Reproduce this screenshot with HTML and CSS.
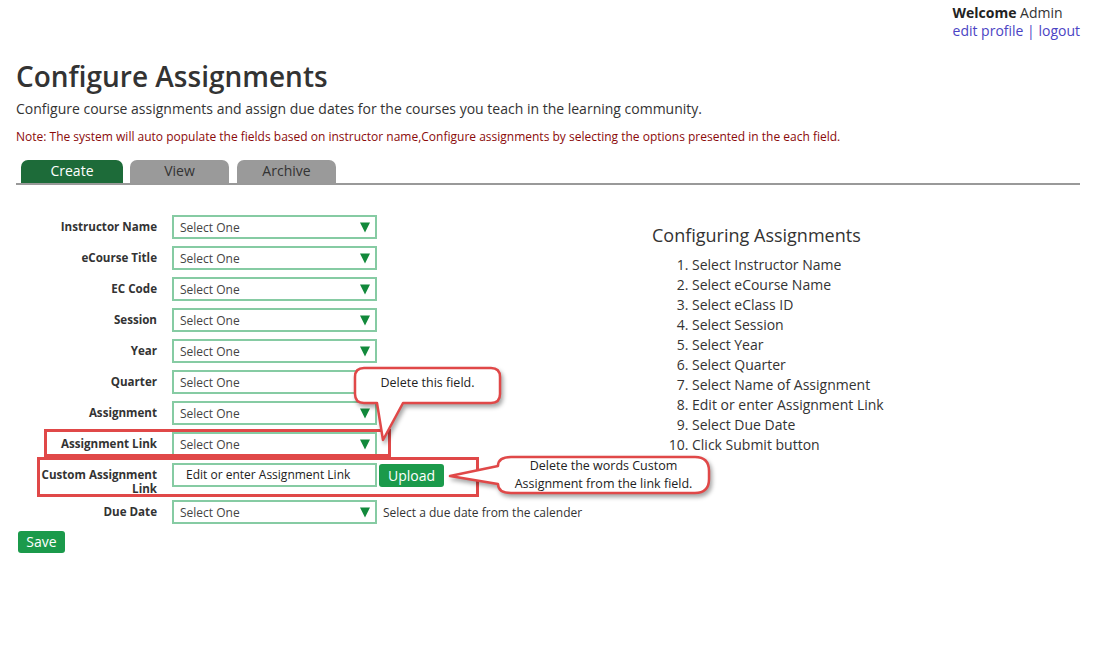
FILE: index.html
```html
<!DOCTYPE html>
<html lang="en">
<head>
<meta charset="utf-8">
<title>Configure Assignments</title>
<link rel="stylesheet" href="styles.css">
</head>
<body>
<header class="top">
  <div class="user">
    <div><b>Welcome</b> Admin</div>
    <div><a href="#">edit profile</a> <span class="sep">|</span> <a href="#">logout</a></div>
  </div>
</header>
<main class="page">
  <h1>Configure Assignments</h1>
  <p class="lead">Configure course assignments and assign due dates for the courses you teach in the learning community.</p>
  <p class="note">Note: The system will auto populate the fields based on instructor name,Configure assignments by selecting the options presented in the each field.</p>
  <nav class="tabs">
    <div class="tab active">Create</div>
    <div class="tab">View</div>
    <div class="tab">Archive</div>
  </nav>
  <div class="content">
    <form class="form">
      <div class="row"><div class="label">Instructor Name</div><div class="field"><div class="select"><span>Select One</span><svg class="arrow" viewBox="0 0 10 10"><polygon points="0,0 10,0 5,10"/></svg></div></div></div>
      <div class="row"><div class="label">eCourse Title</div><div class="field"><div class="select"><span>Select One</span><svg class="arrow" viewBox="0 0 10 10"><polygon points="0,0 10,0 5,10"/></svg></div></div></div>
      <div class="row"><div class="label">EC Code</div><div class="field"><div class="select"><span>Select One</span><svg class="arrow" viewBox="0 0 10 10"><polygon points="0,0 10,0 5,10"/></svg></div></div></div>
      <div class="row"><div class="label">Session</div><div class="field"><div class="select"><span>Select One</span><svg class="arrow" viewBox="0 0 10 10"><polygon points="0,0 10,0 5,10"/></svg></div></div></div>
      <div class="row"><div class="label">Year</div><div class="field"><div class="select"><span>Select One</span><svg class="arrow" viewBox="0 0 10 10"><polygon points="0,0 10,0 5,10"/></svg></div></div></div>
      <div class="row"><div class="label">Quarter</div><div class="field"><div class="select"><span>Select One</span><svg class="arrow" viewBox="0 0 10 10"><polygon points="0,0 10,0 5,10"/></svg></div></div></div>
      <div class="row"><div class="label">Assignment</div><div class="field"><div class="select"><span>Select One</span><svg class="arrow" viewBox="0 0 10 10"><polygon points="0,0 10,0 5,10"/></svg></div></div></div>
      <div class="row"><div class="label">Assignment Link</div><div class="field"><div class="select"><span>Select One</span><svg class="arrow" viewBox="0 0 10 10"><polygon points="0,0 10,0 5,10"/></svg></div></div></div>
      <div class="row row-top"><div class="label label-two">Custom Assignment Link</div><div class="field"><div class="input">Edit or enter Assignment Link</div><button type="button" class="btn upload">Upload</button></div></div>
      <div class="row"><div class="label">Due Date</div><div class="field"><div class="select"><span>Select One</span><svg class="arrow" viewBox="0 0 10 10"><polygon points="0,0 10,0 5,10"/></svg></div><span class="hint">Select a due date from the calender</span></div></div>
    </form>
    <aside class="help">
      <h2>Configuring Assignments</h2>
      <ol>
        <li>Select Instructor Name</li>
        <li>Select eCourse Name</li>
        <li>Select eClass ID</li>
        <li>Select Session</li>
        <li>Select Year</li>
        <li>Select Quarter</li>
        <li>Select Name of Assignment</li>
        <li>Edit or enter Assignment Link</li>
        <li>Select Due Date</li>
        <li>Click Submit button</li>
      </ol>
    </aside>
  </div>
  <button type="button" class="btn save">Save</button>
</main>

<div class="mark mark-link"></div>
<div class="mark mark-custom"></div>

<div class="callout callout-one">
  <svg class="bubble" width="160" height="85" viewBox="0 0 160 85"><path d="M14,5 H141 Q150,5 150,14 V31 Q150,40 141,40 H53 L33,77 L27,40 H14 Q5,40 5,31 V14 Q5,5 14,5 Z"/></svg>
  <div class="callout-text one-text">Delete this field.</div>
</div>
<div class="callout callout-two">
  <svg class="bubble" width="275" height="50" viewBox="0 0 275 50"><path d="M66,5 H250 Q264,5 264,19 V27 Q264,41 250,41 H66 Q53,41 53,32 L5,24 L53,14 Q53,5 66,5 Z"/></svg>
  <div class="callout-text two-text">Delete the words Custom<br>Assignment from the link field.</div>
</div>
</body>
</html>
```
FILE: styles.css
```css
body {
  margin: 0;
  font-family: "Open Sans", "DejaVu Sans", sans-serif;
  color: #333;
  background: #fff;
}

.top {
  display: flex;
  justify-content: flex-end;
  padding: 4px 31px 0 0;
  font-size: 14px;
  line-height: 18px;
}
.user b { font-weight: 700; color: #222; }
.user a { color: #4b44c4; text-decoration: none; }
.sep { color: #4b44c4; }

.page { padding: 0 31px 0 16px; }

h1 {
  margin: 18px 0 0;
  font-size: 28px;
  font-weight: 600;
  line-height: 36px;
  color: #333;
}
.lead {
  margin: 5px 0 0;
  font-size: 14px;
  line-height: 20px;
}
.note {
  margin: 10px 0 0;
  font-size: 12px;
  line-height: 16px;
  color: #8b0a0a;
}

.tabs {
  margin-top: 15px;
  display: flex;
  padding-left: 5px;
  border-bottom: 2px solid #999;
}
.tab {
  width: 99px;
  height: 23px;
  line-height: 22px;
  margin-right: 8px;
  font-size: 14px;
  text-align: center;
  border-radius: 7px 7px 0 0;
  background: #9a9a9a;
  color: #333;
}
.tab.active {
  width: 102px;
  margin-right: 7px;
  background: #1d6b39;
  color: #fff;
}

.content {
  display: flex;
  margin-top: 30px;
}
.form {
  width: 615px;
  margin: 0 0 0 21px;
}
.row {
  display: grid;
  grid-template-columns: 120px 1fr;
  column-gap: 15px;
  align-items: center;
  margin-bottom: 7px;
}
.row-top { align-items: start; }
.label {
  text-align: right;
  font-weight: 700;
  font-size: 11.6px;
  line-height: 14px;
  color: #333;
}
.label-two {
  padding-top: 5px;
  margin-bottom: -3px;
}
.field {
  display: flex;
  align-items: center;
}
.select {
  width: 205px;
  height: 24px;
  box-sizing: border-box;
  border: 2px solid #86cba3;
  display: flex;
  align-items: center;
  justify-content: space-between;
  padding: 0 5px 0 6px;
  font-size: 12px;
  color: #444;
  background: #fff;
}
.arrow {
  width: 10px;
  height: 11px;
  fill: #12893b;
}
.input {
  width: 205px;
  height: 24px;
  box-sizing: border-box;
  border: 2px solid #86cba3;
  padding: 0 0 0 12px;
  font-size: 12px;
  line-height: 20px;
  color: #222;
}
.btn {
  border: 0;
  border-radius: 3px;
  background: #1b9a4b;
  color: #fff;
  font-family: "Open Sans", "DejaVu Sans", sans-serif;
  font-size: 14px;
  padding: 0;
  cursor: pointer;
}
.upload {
  width: 65px;
  height: 23px;
  margin-left: 2px;
}
.hint {
  margin-left: 6px;
  font-size: 12px;
  color: #333;
}
.save {
  display: block;
  margin-left: 2px;
  width: 47px;
  height: 22px;
  line-height: 22px;
}

.help { padding-top: 8px; }
.help h2 {
  margin: 0;
  font-size: 18px;
  font-weight: 400;
  line-height: 24px;
  color: #333;
}
.help ol {
  margin: 8px 0 0;
  padding-left: 40px;
  font-size: 14px;
  line-height: 20px;
}

.mark {
  position: absolute;
  border: 3px solid #e04848;
  box-sizing: border-box;
}
.mark-link { left: 44px; top: 429px; width: 347px; height: 28px; }
.mark-custom { left: 37px; top: 457px; width: 442px; height: 40px; }

.callout { position: absolute; }
.callout-one { left: 350px; top: 363px; width: 160px; height: 85px; }
.callout-two { left: 445px; top: 452px; width: 275px; height: 50px; }
.bubble {
  display: block;
  overflow: visible;
  filter: drop-shadow(2px 3px 2px rgba(0, 0, 0, 0.35));
}
.bubble path {
  fill: #fff;
  stroke: #e04848;
  stroke-width: 2.5;
  stroke-linejoin: round;
}
.callout-text {
  position: absolute;
  font-size: 12.5px;
  line-height: 18px;
  color: #222;
  text-align: center;
}
.one-text { left: 5px; top: 11px; width: 145px; }
.two-text { left: 53px; top: 5px; width: 211px; }
```
